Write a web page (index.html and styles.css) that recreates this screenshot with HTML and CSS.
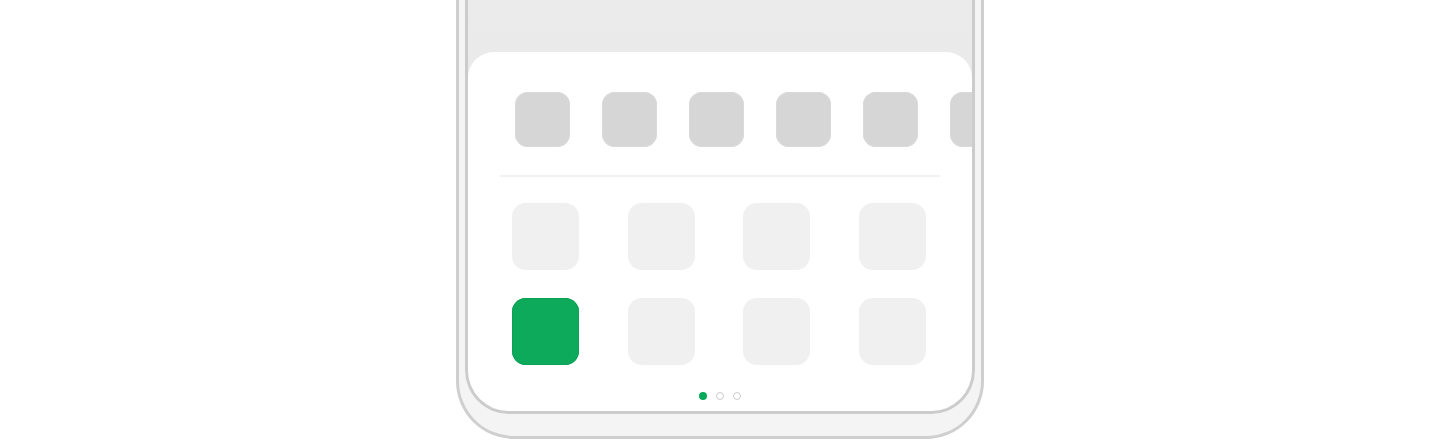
FILE: index.html
```html
<!DOCTYPE html>
<html>
<head>
<meta charset="utf-8">
<link rel="stylesheet" href="styles.css">
</head>
<body>
<div class="phone">
  <div class="screen">
    <div class="status"></div>
    <div class="panel">
      <div class="top-row">
        <div class="app-s"></div>
        <div class="app-s"></div>
        <div class="app-s"></div>
        <div class="app-s"></div>
        <div class="app-s"></div>
        <div class="app-s"></div>
      </div>
      <div class="divider"></div>
      <div class="grid">
        <div class="app"></div>
        <div class="app"></div>
        <div class="app"></div>
        <div class="app"></div>
        <div class="app app-green"></div>
        <div class="app"></div>
        <div class="app"></div>
        <div class="app"></div>
      </div>
      <div class="dots">
        <span class="dot dot-active"></span>
        <span class="dot"></span>
        <span class="dot"></span>
      </div>
    </div>
  </div>
</div>
</body>
</html>
```
FILE: styles.css
```css
html, body {
  margin: 0;
  padding: 0;
  background: #ffffff;
  height: 440px;
  overflow: hidden;
}

.phone {
  box-sizing: border-box;
  width: 528px;
  height: 439px;
  margin: 0 0 0 456px;
  background: #f4f4f4;
  border: 3px solid #cfcfcf;
  border-top: none;
  border-radius: 0 0 58px 58px;
  padding: 0 6px 22px 6px;
}

.screen {
  box-sizing: border-box;
  height: 414px;
  border: 3px solid #cccccc;
  border-top: none;
  border-radius: 0 0 44px 44px;
  background: linear-gradient(#ebebeb, #e6e6e6);
  overflow: hidden;
  display: flex;
  flex-direction: column;
}

.status {
  height: 52px;
  flex: none;
}

.panel {
  flex: 1;
  background: #ffffff;
  border-radius: 26px 26px 0 0;
  padding-top: 40px;
  display: flex;
  flex-direction: column;
  overflow: hidden;
}

.top-row {
  display: flex;
  gap: 32px;
  padding-left: 47px;
  overflow: hidden;
}

.app-s {
  flex: none;
  width: 55px;
  height: 55px;
  border-radius: 13px;
  background: #d6d6d6;
  box-shadow: inset 0 0 0 1px #dadada;
}

.divider {
  height: 2px;
  background: #f1f1f1;
  margin: 28px 32px 0 32px;
}

.grid {
  display: grid;
  grid-template-columns: repeat(4, 67px);
  justify-content: space-between;
  row-gap: 28px;
  padding: 0 46px 0 44px;
  margin-top: 26px;
}

.app {
  width: 67px;
  height: 67px;
  border-radius: 14px;
  background: #f0f0f0;
}

.app-green {
  background: #0eaa5b;
  box-shadow: inset 0 0 0 1px #0ca256;
}

.dots {
  display: flex;
  justify-content: center;
  gap: 9px;
  margin-top: 27px;
}

.dot {
  box-sizing: border-box;
  width: 8px;
  height: 8px;
  border-radius: 50%;
  border: 1.5px solid #cccccc;
  background: #ffffff;
}

.dot-active {
  border: none;
  background: #0aa85a;
}
```
